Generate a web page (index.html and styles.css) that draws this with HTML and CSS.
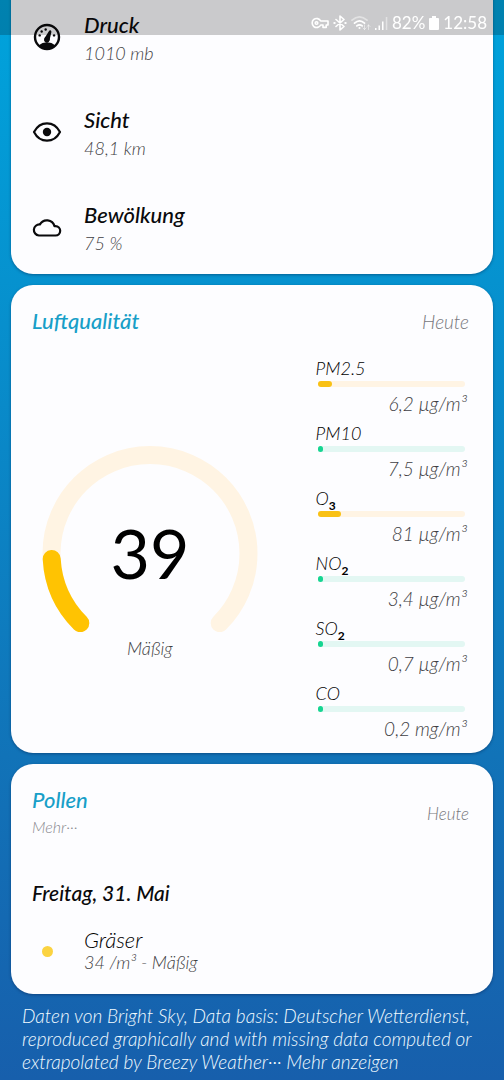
FILE: index.html
```html
<!DOCTYPE html>
<html lang="de">
<head>
<meta charset="utf-8">
<meta name="viewport" content="width=device-width, initial-scale=1">
<title>Wetter</title>
<link rel="stylesheet" href="styles.css">
</head>
<body>
<header class="status-bar">
  <svg class="icon-key" viewBox="0 0 18 12" width="18" height="12" fill="none" stroke="currentColor" stroke-width="1.6" stroke-linejoin="round"><path d="M9.7 4A4.5 4.5 0 1 0 9.7 8H12v2.400h3.200V8H17V4z"/><circle cx="5.500" cy="6" r="1.300"/></svg>
  <svg viewBox="0 0 14 16" width="14" height="16" fill="none" stroke="currentColor" stroke-width="1.600" stroke-linejoin="round" stroke-linecap="round"><path d="M3 4.500l8 7L7 15V1l4 3.500-8 7"/><path d="M1.300 8h.4M12.300 8h.4" stroke-width="2"/></svg>
  <svg viewBox="0 0 20 16" width="20" height="16" fill="none" stroke="currentColor" stroke-width="1.700" stroke-linecap="round"><path d="M1 5.200Q8.500-1.500 16 5.200" opacity=".45"/><path d="M3.500 8.200Q8.500 3.700 13.500 8.200M5.800 10.900Q8.500 8.700 11.200 10.900"/><circle cx="8.500" cy="13" r="1" fill="currentColor" stroke="none"/><path d="M13.500 10v4.500M12 13l1.500 1.500L15 13M17.500 14.500V10M16 11.500l1.500-1.500 1.500 1.500" stroke-width="1" opacity=".5"/></svg>
  <svg viewBox="0 0 13 13" width="13" height="13" fill="currentColor"><path d="M0 11h1.500v2H0zM3.500 8.500H5V13H3.500zM7 4.500h1.500V13H7z"/><path d="M10.800 0h1.500v13h-1.500z" opacity=".45"/></svg>
  <span class="battery-text">82%</span>
  <svg viewBox="0 0 10 14" width="10" height="14" fill="currentColor"><path d="M3 0h4v2h2q1 0 1 1v10q0 1-1 1H1q-1 0-1-1V3q0-1 1-1h2z"/></svg>
  <time>12:58</time>
</header>

<main class="cards">
  <section class="card details">
    <div class="detail">
      <svg viewBox="0 0 24 24" width="32" height="32"><circle cx="12" cy="12" r="9" fill="none" stroke="currentColor" stroke-width="1.800"/><path d="M5.600 18.300Q8.500 16 12 16t6.400 2.300Q15.500 21 12 21t-6.400-2.700zM10 13.500a2 2 0 1 0 3.900.8l.2-.8 1.200-5.200q.1-1-.7-1.300-.7-.2-1.200.6l-2.800 4.600z" fill="currentColor"/><circle cx="12" cy="13.700" r="2" fill="currentColor"/><g fill="currentColor"><circle cx="6.500" cy="10.800" r=".9"/><circle cx="8" cy="7.900" r=".9"/><circle cx="11" cy="6.400" r=".9"/><circle cx="17.300" cy="10.800" r=".9"/></g></svg>
      <div class="detail-text"><h3>Druck</h3><p>1010 mb</p></div>
    </div>
    <div class="detail">
      <svg viewBox="0 0 32 32" width="32" height="32"><path d="M3 16Q7.500 7.300 16 7.300T29 16q-4.500 8.700-13 8.700T3 16z" fill="none" stroke="currentColor" stroke-width="2.200" stroke-linejoin="round"/><circle cx="16" cy="16" r="4.200" fill="currentColor"/></svg>
      <div class="detail-text"><h3>Sicht</h3><p>48,1 km</p></div>
    </div>
    <div class="detail">
      <svg viewBox="0 0 32 32" width="32" height="32"><path d="M7.900 24.500H24.500a4.700 4.700 0 0 0 0-9.400h-1A7.900 7.900 0 0 0 8.900 13.500 5.500 5.500 0 0 0 7.900 24.500z" fill="none" stroke="currentColor" stroke-width="2.200" stroke-linejoin="round"/></svg>
      <div class="detail-text"><h3>Bewölkung</h3><p>75 %</p></div>
    </div>
  </section>

  <section class="card air">
    <div class="card-head">
      <h2>Luftqualität</h2>
      <span class="day">Heute</span>
    </div>
    <div class="air-body">
      <figure class="gauge">
        <svg viewBox="0 0 216 186" width="216" height="186" fill="none" stroke-width="18" stroke-linecap="round">
          <path d="M38.300 177.200A98.500 98.500 0 1 1 177.700 177.200" stroke="#fff4e3"/>
          <path d="M38.300 177.200A98.500 98.500 0 0 1 9.700 113" stroke="#ffc302"/>
          <text x="108" y="133" text-anchor="middle" class="gauge-value">39</text>
        </svg>
        <figcaption>Mäßig</figcaption>
      </figure>
      <ul class="pollutants">
        <li><span class="name">PM2.5</span><div class="bar warm"><i style="width:10%"></i></div><span class="amount">6,2 µg/m³</span></li>
        <li><span class="name">PM10</span><div class="bar fresh"><i style="width:4%"></i></div><span class="amount">7,5 µg/m³</span></li>
        <li><span class="name">O<sub>3</sub></span><div class="bar warm"><i style="width:16%"></i></div><span class="amount">81 µg/m³</span></li>
        <li><span class="name">NO<sub>2</sub></span><div class="bar fresh"><i style="width:4%"></i></div><span class="amount">3,4 µg/m³</span></li>
        <li><span class="name">SO<sub>2</sub></span><div class="bar fresh"><i style="width:4%"></i></div><span class="amount">0,7 µg/m³</span></li>
        <li><span class="name">CO</span><div class="bar fresh"><i style="width:4%"></i></div><span class="amount">0,2 mg/m³</span></li>
      </ul>
    </div>
  </section>

  <section class="card pollen">
    <div class="card-head">
      <div>
        <h2>Pollen</h2>
        <a class="more" href="#">Mehr···</a>
      </div>
      <span class="day small">Heute</span>
    </div>
    <h3 class="date">Freitag, 31. Mai</h3>
    <div class="pollen-row">
      <span class="dot"></span>
      <div><p class="plant">Gräser</p><p class="level">34 /m³ - Mäßig</p></div>
    </div>
  </section>
</main>

<footer class="credits">Daten von Bright Sky, Data basis: Deutscher Wetterdienst, reproduced graphically and with missing data computed or extrapolated by Breezy Weather··· <a href="#">Mehr anzeigen</a></footer>
</body>
</html>
```
FILE: styles.css
```css
* {
  box-sizing: border-box;
}

body {
  margin: 0;
  min-height: 100vh;
  overflow-x: hidden;
  background: linear-gradient(#00a3dc, #0692cf 26%, #1173b8 70%, #175fac);
  color: #0a0a0c;
  font-family: Lato, "Open Sans", sans-serif;
  font-style: italic;
}

h2, h3, p, ul, figure {
  margin: 0;
  padding: 0;
}

svg {
  display: block;
  flex: none;
}

.status-bar {
  position: fixed;
  z-index: 1;
  top: 0;
  left: 0;
  right: 0;
  height: 35px;
  padding: 11px 17px 0 0;
  display: flex;
  justify-content: flex-end;
  align-items: center;
  gap: 4px;
  background: rgba(0, 0, 0, 0.2);
  color: #fff;
  font-size: 17px;
  line-height: 24px;
  font-style: normal;
  font-weight: 400;
}

.cards {
  display: flex;
  flex-direction: column;
  gap: 11px;
  padding: 0 11px;
}

.card {
  background: #fdfdff;
  border-radius: 22px;
  box-shadow: 0 1px 3px rgba(0, 20, 60, 0.4);
}

.details {
  margin-top: -11px;
  padding: 0 20px;
  border-radius: 0 0 22px 22px;
}

.detail {
  height: 95px;
  display: flex;
  align-items: center;
  gap: 21px;
}

.detail-text {
  padding-top: 4px;
  line-height: 29px;
}

.detail-text h3 {
  font-size: 22px;
  font-weight: 500;
}

.detail-text p {
  font-size: 18px;
  font-weight: 300;
  color: #3f3f44;
}

.card-head {
  display: flex;
  justify-content: space-between;
  align-items: center;
  padding: 22px 24px 0 21px;
}

h2 {
  font-size: 22px;
  line-height: 28px;
  font-weight: 500;
  color: #189fc8;
}

.day {
  font-size: 19px;
  font-weight: 300;
  color: #77777c;
}

.day.small {
  font-size: 17px;
}

.air {
  padding-bottom: 8px;
}

.air-body {
  display: grid;
  grid-template-columns: 11fr 6fr;
  align-items: center;
  gap: 27px;
  padding: 20px 26px 0 0;
}

.gauge {
  display: flex;
  flex-direction: column;
  align-items: center;
  gap: 4px;
  padding-top: 6px;
}

.gauge-value {
  font-size: 68px;
  font-weight: 400;
  font-style: normal;
  fill: #000;
}

.gauge figcaption {
  font-size: 18px;
  line-height: 24px;
  font-weight: 300;
  color: #3f3f44;
}

.pollutants {
  list-style: none;
}

.pollutants li {
  display: flex;
  flex-direction: column;
}

.name {
  font-size: 18px;
  line-height: 26px;
  height: 26px;
  font-weight: 300;
  color: #000;
}

.name sub {
  font-size: 12px;
  line-height: 0;
  font-weight: 700;
  font-style: normal;
}

.bar {
  height: 6px;
  margin: 0 2px;
  border-radius: 3px;
}

.bar i {
  display: block;
  height: 6px;
  border-radius: 3px;
}

.warm {
  background: #fff4e4;
}

.warm i {
  background: #f9c115;
}

.fresh {
  background: #e3f7f3;
}

.fresh i {
  background: #16d591;
}

.amount {
  align-self: flex-end;
  font-size: 19px;
  line-height: 33px;
  font-weight: 300;
  color: #3f3f44;
}

.pollen {
  padding-bottom: 20px;
}

.more {
  display: block;
  font-size: 16px;
  line-height: 26px;
  font-weight: 300;
  color: #8a8a8f;
  text-decoration: none;
}

.date {
  padding: 39px 21px 0;
  font-size: 21px;
  line-height: 28px;
  font-weight: 500;
}

.pollen-row {
  display: flex;
  align-items: center;
  gap: 31px;
  padding: 21px 31px 0;
}

.dot {
  width: 11px;
  height: 11px;
  border-radius: 50%;
  background: #fbd341;
}

.plant {
  font-size: 22px;
  line-height: 23px;
  font-weight: 300;
  color: #000;
}

.level {
  font-size: 18px;
  line-height: 23px;
  font-weight: 300;
  color: #3f3f44;
}

.credits {
  padding: 10px 22px 6px;
  font-size: 19px;
  line-height: 23px;
  font-weight: 300;
  color: #f2fbff;
}

.credits a {
  color: inherit;
  text-decoration: none;
}
```
